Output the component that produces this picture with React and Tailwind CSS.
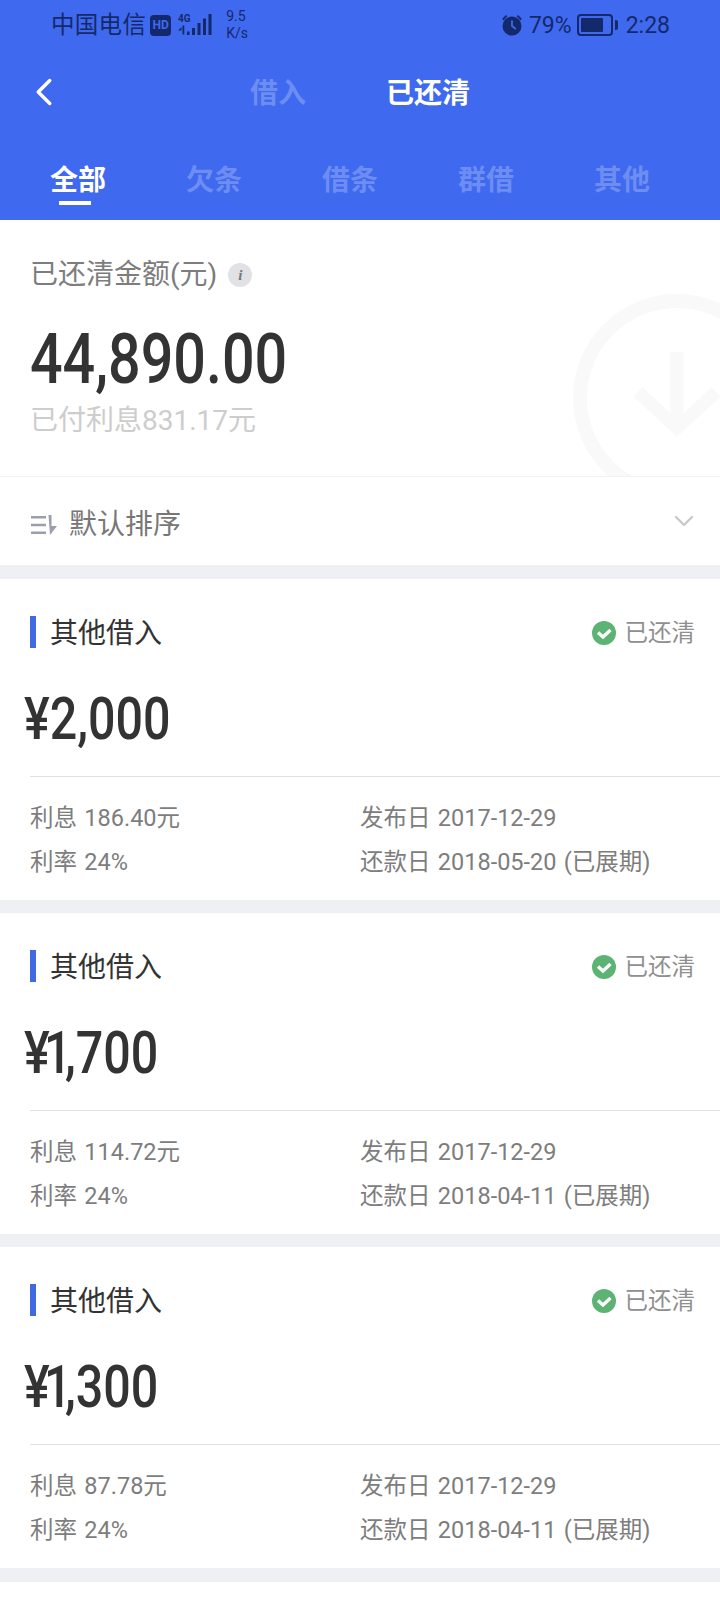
import { ChevronLeft, ChevronDown } from "lucide-react";

const cjk = "font-['Roboto','Noto_Sans_CJK_SC',sans-serif]";

const records = [
  { lead: "2", rest: ",000", interest: "186.40元", due: "2018-05-20" },
  { lead: "1", rest: ",700", interest: "114.72元", due: "2018-04-11" },
  { lead: "1", rest: ",300", interest: "87.78元", due: "2018-04-11" },
];

const StatusBar = () => (
  <div className="flex h-[50px] items-center justify-between pl-[51px] pr-[50px] text-[#14296b]">
    <div className="flex items-center">
      <span className="pt-[2px] text-[23.5px] leading-none tracking-[0.3px]">中国电信</span>
      <span className="ml-[4px] flex h-[21px] w-[21px] items-center justify-center rounded-[4px] bg-[#14296b] text-[12px] font-bold leading-none text-[#3f69ee]">
        HD
      </span>
      <svg className="ml-[7px]" width="36" height="24" viewBox="0 0 36 24" fill="#14296b">
        <text x="0" y="9" fontSize="10" fontWeight="700" fontFamily="Roboto">4G</text>
        <path d="M0 17.500l3.500-3.500v3.500zM4.500 12.500h1.800v9H4.500zM9 18.500h2.500V22H9zM14 15h3v7h-3zM19.500 10h3v12h-3zM25 5.500h3V22h-3zM30.500 1h3v21h-3z" />
      </svg>
      <span className="ml-[12px] flex flex-col text-[14px] leading-[17px]">
        <span>9.5</span>
        <span>K/s</span>
      </span>
    </div>
    <div className="flex items-center">
      <svg width="24" height="24" viewBox="0 0 24 24" fill="#14296b">
        <circle cx="12" cy="13" r="9.500" />
        <path d="M2 6l4-4 1.400 1.200-4 4zM22 6l-4-4-1.400 1.200 4 4z" />
        <path d="M12 7.500V13l3.800 3" fill="none" stroke="#3f69ee" strokeWidth="1.800" />
      </svg>
      <span className="ml-[5px] text-[23px] leading-none">79%</span>
      <span className="ml-[5px] flex h-[22px] w-[36px] items-center rounded-[4px] border-2 border-[#14296b] p-[2px]">
        <span className="h-full w-[80%] rounded-[1px] bg-[#14296b]" />
      </span>
      <span className="ml-[2px] h-[10px] w-[3px] rounded-r-[2px] bg-[#14296b]" />
      <span className="ml-[8px] text-[23px] leading-none">2:28</span>
    </div>
  </div>
);

const Header = () => (
  <div className="h-[220px] bg-[#3f69ee]">
    <StatusBar />
    <div className="relative mt-[24px] flex h-[40px] items-center justify-center gap-[80px] text-[28px] font-bold leading-none">
      <ChevronLeft className="absolute left-[21px] top-[-5px] text-white" size={46} strokeWidth={1.8} />
      <span className="text-[#6d8df3]">借入</span>
      <span className="text-white">已还清</span>
    </div>
    <div className="mt-[53px] flex pl-[50px] text-[28px] font-bold leading-none text-[#6d8df3]">
      <span className="relative w-[136px] text-white">
        全部
        <span className="absolute left-[9px] top-[34px] h-[4px] w-[32px] bg-white" />
      </span>
      <span className="w-[136px]">欠条</span>
      <span className="w-[136px]">借条</span>
      <span className="w-[136px]">群借</span>
      <span>其他</span>
    </div>
  </div>
);

const Summary = () => (
  <div className="relative h-[257px] overflow-hidden border-b border-[#f1f1f3]">
    <div className="absolute left-[573px] top-[74px] h-[208px] w-[208px] rounded-full border-[14px] border-[#f9f9fa]" />
    <svg className="absolute left-[634px] top-[128px]" width="86" height="90" viewBox="0 0 86 90" fill="none" stroke="#f9f9fa" strokeWidth="13">
      <path d="M43 4v74M4 44l39 36 39-36" />
    </svg>
    <div className="relative pl-[30px] pt-[37px]">
      <div className="flex items-center text-[28px] leading-[36px] text-[#7d7d7d]">
        已还清金额(元)
        <span className="ml-[11px] flex h-[24px] w-[24px] items-center justify-center rounded-full bg-[#e1e2e6] font-['Liberation_Serif',serif] text-[15px] italic font-bold text-[#777]">
          i
        </span>
      </div>
      <div className="mt-[31px] origin-left scale-x-[0.82] whitespace-nowrap text-[70px] font-medium leading-[70px] text-[#333]">
        44,890.00
      </div>
      <div className="mt-[9px] text-[28px] leading-[36px] text-[#cdcdcd]">已付利息831.17元</div>
    </div>
  </div>
);

const SortBar = () => (
  <div className="flex h-[88px] items-center justify-between pl-[31px] pr-[20px]">
    <div className="flex items-center">
      <svg className="mt-[8px]" width="26" height="20" viewBox="0 0 26 20" fill="#9a9eae">
        <path d="M0 1h15v2.600H0zM0 8.700h15v2.600H0zM0 16.400h15V19H0zM17.500 0h3v11H26l-7 9z" />
      </svg>
      <span className="ml-[12px] pt-[8px] text-[28px] leading-none text-[#777]">默认排序</span>
    </div>
    <ChevronDown className="text-[#c9c9c9]" size={32} strokeWidth={1.8} />
  </div>
);

const Record = ({ lead, rest, interest, due }) => (
  <div className="h-[321px] bg-white">
    <div className="flex items-center justify-between pr-[25px] pt-[37px]">
      <div className="flex items-start pl-[30px]">
        <span className="h-[32px] w-[6px] bg-[#4169e1]" />
        <span className="ml-[14px] mt-[2px] text-[28px] leading-[32px] text-[#333]">其他借入</span>
      </div>
      <div className="flex items-center">
        <svg width="24" height="24" viewBox="0 0 24 24">
          <circle cx="12" cy="12" r="12" fill="#5cb374" />
          <path d="M6 11.500l5 4.500 7.500-7" fill="none" stroke="#fff" strokeWidth="3.400" />
        </svg>
        <span className="ml-[9px] pt-[2px] text-[23.5px] leading-none text-[#8f8f8f]">已还清</span>
      </div>
    </div>
    {/* the DIN "1" is narrow, Roboto's is not: pull it in with tracking */}
    <div className="ml-[24px] mt-[34px] origin-left scale-x-[0.82] whitespace-nowrap text-[59px] font-medium leading-[70px] text-[#333]">
      <span className={lead === "1" ? "tracking-[-7px]" : ""}>¥</span>
      <span className={lead === "1" ? "tracking-[-8px]" : ""}>{lead}</span>
      {rest}
    </div>
    <div className="ml-[30px] mt-[22px] border-t border-[#e2e2e4] pt-[19px] text-[23.5px] leading-[44px] text-[#7d7d7d] [word-spacing:1.5px]">
      <div className="grid grid-cols-[330px_1fr]">
        <span>利息 {interest}</span>
        <span>发布日 2017-12-29</span>
        <span>利率 24%</span>
        <span>还款日 {due} (已展期)</span>
      </div>
    </div>
  </div>
);

export default function App() {
  return (
    <div className={`h-[1600px] w-[720px] overflow-hidden bg-white ${cjk}`}>
      <Header />
      <Summary />
      <SortBar />
      <div className="flex flex-col gap-[13px] bg-[#eff0f3] py-[14px]">
        {records.map((r, i) => (
          <Record key={i} {...r} />
        ))}
      </div>
    </div>
  );
}
